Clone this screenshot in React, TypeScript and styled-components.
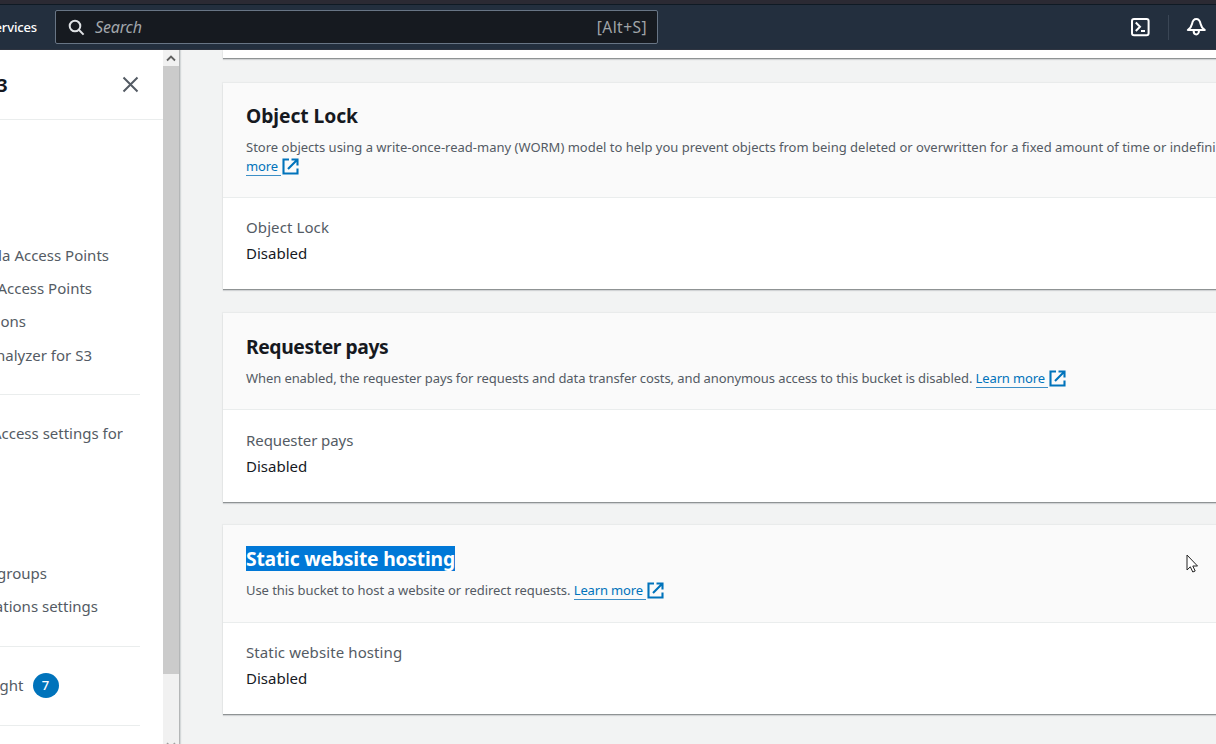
import React from "react";
import styled, { createGlobalStyle } from "styled-components";

const GlobalStyle = createGlobalStyle`
  * { box-sizing: border-box; }
  html, body { margin: 0; padding: 0; }
  body {
    width: 1216px;
    height: 744px;
    overflow: hidden;
    background: #f2f3f3;
    font-family: "Noto Sans", "Open Sans", sans-serif;
    color: #16191f;
  }
`;

const Page = styled.div`
  width: 1216px;
  height: 744px;
  display: flex;
  flex-direction: column;
  overflow: hidden;
`;

const TopBar = styled.header`
  height: 50px;
  flex: none;
  display: flex;
  align-items: flex-start;
  padding-top: 5px;
  border-top: 4px solid #2b2a33;
  border-bottom: 1px solid #2e3440;
  background: linear-gradient(#0f1a24 0 1px, #232f3e 1px);
`;

const ServicesLabel = styled.div`
  width: 37px;
  margin-right: 18px;
  display: flex;
  justify-content: flex-end;
  overflow: hidden;
  white-space: nowrap;
  font-size: 13px;
  font-weight: 500;
  line-height: 37px;
  letter-spacing: -0.15px;
  color: #fff;
`;

const SearchBox = styled.div`
  width: 603px;
  height: 34px;
  margin-top: 1px;
  display: flex;
  align-items: center;
  padding: 0 10px 0 12px;
  border: 1px solid #687585;
  border-radius: 2px;
  background: #161a20;
`;

const SearchHint = styled.span`
  margin: -1px 0 0 10px;
  font-size: 16px;
  font-style: italic;
  letter-spacing: -0.15px;
  color: #a2a7ac;
`;

const Shortcut = styled.span`
  margin-left: auto;
  font-size: 15.5px;
  letter-spacing: 0.45px;
  color: #a0a4a8;
`;

const BarActions = styled.div`
  height: 34px;
  margin: 1px 0 0 auto;
  display: flex;
  align-items: center;
  padding-right: 10px;
`;

const BarDivider = styled.div`
  width: 1px;
  height: 25px;
  margin: 0 17px 0 18px;
  background: #3a4655;
`;

const Body = styled.div`
  flex: 1;
  min-height: 0;
  display: flex;
`;

const Sidebar = styled.nav`
  width: 163px;
  flex: none;
  background: #fff;
  overflow: hidden;
`;

const SidebarHead = styled.div`
  height: 70px;
  display: flex;
  align-items: center;
  justify-content: space-between;
  padding-right: 24px;
  border-bottom: 1px solid #eaeded;
`;

const SidebarTitle = styled.div<{ $end: number }>`
  width: ${(p) => p.$end}px;
  display: flex;
  justify-content: flex-end;
  overflow: hidden;
  font-size: 18px;
  font-weight: 700;
`;

const NavGroup = styled.div<{ $top: number; $bottom: number }>`
  width: 140px;
  padding: ${(p) => p.$top}px 0 ${(p) => p.$bottom}px;
  border-bottom: 1px solid #eaeded;
`;

const NavItem = styled.div<{ $end: number }>`
  width: ${(p) => p.$end}px;
  height: 33.4px;
  display: flex;
  align-items: center;
  justify-content: flex-end;
  overflow: hidden;
  white-space: nowrap;
  font-size: 15px;
  color: #545b64;
`;

const NavSpace = styled.div`
  height: 106px;
`;

const Badge = styled.span`
  width: 26px;
  height: 25px;
  flex: none;
  margin-left: 9px;
  border-radius: 50%;
  background: #0073bb;
  color: #fff;
  font-size: 13px;
  font-weight: 500;
  line-height: 25px;
  text-align: center;
`;

const Scrollbar = styled.div`
  width: 17px;
  flex: none;
  display: flex;
  flex-direction: column;
  align-items: stretch;
  border-right: 1px solid #b4b6b7;
  box-shadow: 1px 0 1px rgba(0, 28, 36, 0.12);
  background: #f1f1f1;
`;

const ScrollButton = styled.div`
  height: 16px;
  display: flex;
  align-items: center;
  justify-content: center;
`;

const Thumb = styled.div`
  height: 608px;
  background: #cbcbcb;
`;

const ScrollEnd = styled.div`
  flex: 1;
  display: flex;
  align-items: flex-end;
  justify-content: center;
`;

const Main = styled.main`
  flex: 1;
  min-width: 0;
  padding-left: 43px;
  overflow: hidden;
`;

const Card = styled.section<{ $height: number; $gap: number }>`
  height: ${(p) => p.$height}px;
  margin-bottom: ${(p) => p.$gap}px;
  background: #fff;
  box-shadow: 0 1px 0 #8f9394, 0 2px 1px rgba(0, 10, 20, 0.13), 0 0 1px 1px rgba(0, 28, 36, 0.035);
`;

const CardHead = styled.div<{ $height: number; $top: number }>`
  height: ${(p) => p.$height}px;
  padding: ${(p) => p.$top}px 0 0 23px;
  border-bottom: 1px solid #eaeded;
  background: #fafafa;
`;

const Title = styled.h2<{ $selected?: boolean; $spacing: number }>`
  width: fit-content;
  margin: 0;
  font-size: 19.3px;
  font-weight: 700;
  line-height: 25px;
  letter-spacing: ${(p) => p.$spacing}px;
  white-space: nowrap;
  color: ${(p) => (p.$selected ? "#fff" : "#16191f")};
  background: ${(p) => (p.$selected ? "#0078d7" : "transparent")};
`;

const Description = styled.p<{ $spacing: number }>`
  margin: 10px 0 0;
  font-size: 13px;
  line-height: 19px;
  letter-spacing: ${(p) => p.$spacing}px;
  white-space: nowrap;
  color: #545b64;
`;

const Link = styled.a`
  display: inline-flex;
  align-items: center;
  height: 19px;
  color: #0073bb;
  vertical-align: top;
`;

const LinkText = styled.span`
  padding-right: 3px;
  margin-right: 1px;
  border-bottom: 1px solid #3d8fc6;
  line-height: 17px;
  letter-spacing: -0.14px;
`;

const Field = styled.dl<{ $top: number }>`
  margin: 0;
  padding: ${(p) => p.$top}px 0 0 23px;
  font-size: 15px;
  line-height: 26.4px;
`;

const FieldLabel = styled.dt<{ $spacing: number }>`
  letter-spacing: ${(p) => p.$spacing}px;
  color: #545b64;
`;

const FieldValue = styled.dd`
  margin: 0;
  color: #16191f;
`;

const Pointer = styled.svg`
  position: absolute;
  left: 1186px;
  top: 554px;
`;

const ExternalIcon = () => (
  <svg width="17" height="17" viewBox="0 0 17 17" fill="none" stroke="#0073bb" strokeWidth="2.1">
    <path d="M7 1.5H1.5v14h14V10.5" />
    <path d="M9.5 1.5h6v6M15.2 1.8L6 11" />
  </svg>
);

const LearnMore = ({ text }: { text: string }) => (
  <Link>
    <LinkText>{text}</LinkText>
    <ExternalIcon />
  </Link>
);

export default function App() {
  return (
    <Page>
      <GlobalStyle />
      <TopBar>
        <ServicesLabel>ervices</ServicesLabel>
        <SearchBox>
          <svg width="17" height="17" viewBox="0 0 17 17" fill="none" stroke="#dfe2e5" strokeWidth="2">
            <circle cx="7" cy="7" r="5.3" />
            <path d="M10.8 10.8L15.6 15.6" />
          </svg>
          <SearchHint>Search</SearchHint>
          <Shortcut>[Alt+S]</Shortcut>
        </SearchBox>
        <BarActions>
          <svg width="20" height="20" viewBox="0 0 20 20" fill="none" stroke="#fff" strokeWidth="2">
            <rect x="2" y="2" width="16.6" height="16.2" rx="2" />
            <path d="M5.8 5.5L10 9.8L5.8 14M11 14H15" />
          </svg>
          <BarDivider />
          <svg width="20" height="20" viewBox="0 0 20 20" fill="none" stroke="#fff" strokeWidth="2" strokeLinejoin="round">
            <path d="M10.3 2C7.8 2 6.6 4 6 7C5.5 9.8 4 11.4 1.8 13H18.8C16.6 11.4 15.1 9.8 14.6 7C14 4 12.8 2 10.3 2Z" />
            <path d="M7.6 13.5C7.6 18.7 13 18.7 13 13.5" />
          </svg>
        </BarActions>
      </TopBar>
      <Body>
        <Sidebar>
          <SidebarHead>
            <SidebarTitle $end={7.5}>3</SidebarTitle>
            <svg width="17" height="17" viewBox="0 0 17 17" fill="none" stroke="#545b64" strokeWidth="2">
              <path d="M1.5 1.5L15.5 15.5M15.5 1.5L1.5 15.5" />
            </svg>
          </SidebarHead>
          <NavGroup $top={118} $bottom={22}>
            <NavItem $end={109}>da Access Points</NavItem>
            <NavItem $end={92}>Access Points</NavItem>
            <NavItem $end={26}>ons</NavItem>
            <NavItem $end={92}>nalyzer for S3</NavItem>
          </NavGroup>
          <NavGroup $top={22} $bottom={23}>
            <NavItem $end={123}>Access settings for</NavItem>
            <NavSpace />
            <NavItem $end={47}>groups</NavItem>
            <NavItem $end={98}>ations settings</NavItem>
          </NavGroup>
          <NavGroup $top={22} $bottom={23}>
            <NavItem $end={58.5}>
              ght<Badge>7</Badge>
            </NavItem>
          </NavGroup>
        </Sidebar>
        <Scrollbar>
          <ScrollButton>
            <svg width="10" height="7" viewBox="0 0 10 7" fill="none" stroke="#606060" strokeWidth="1.8">
              <path d="M1 5.5L5 1.5L9 5.5" />
            </svg>
          </ScrollButton>
          <Thumb />
          <ScrollEnd>
            <svg width="10" height="2" viewBox="0 0 10 2" fill="none" stroke="#a0a0a0" strokeWidth="1.5">
              <path d="M1 1L2.5 2.5M9 1L7.5 2.5" />
            </svg>
          </ScrollEnd>
        </Scrollbar>
        <Main>
          <Card $height={8} $gap={25} />
          <Card $height={206} $gap={24}>
            <CardHead $height={115} $top={20}>
              <Title $spacing={-0.07}>Object Lock</Title>
              <Description $spacing={0}>
                Store objects using a write-once-read-many (WORM) model to help you prevent objects from being deleted or
                overwritten for a fixed amount of time or indefini
                <br />
                <LearnMore text="more" />
              </Description>
            </CardHead>
            <Field $top={16}>
              <FieldLabel $spacing={0.1}>Object Lock</FieldLabel>
              <FieldValue>Disabled</FieldValue>
            </Field>
          </Card>
          <Card $height={189} $gap={23}>
            <CardHead $height={97} $top={21}>
              <Title $spacing={-0.4}>Requester pays</Title>
              <Description $spacing={-0.09}>
                When enabled, the requester pays for requests and data transfer costs, and anonymous access to this
                bucket is disabled. <LearnMore text="Learn more" />
              </Description>
            </CardHead>
            <Field $top={17}>
              <FieldLabel $spacing={-0.08}>Requester pays</FieldLabel>
              <FieldValue>Disabled</FieldValue>
            </Field>
          </Card>
          <Card $height={189} $gap={0}>
            <CardHead $height={98} $top={21}>
              <Title $spacing={-0.2} $selected>
                Static website hosting
              </Title>
              <Description $spacing={-0.06}>
                Use this bucket to host a website or redirect requests. <LearnMore text="Learn more" />
              </Description>
            </CardHead>
            <Field $top={16}>
              <FieldLabel $spacing={0.1}>Static website hosting</FieldLabel>
              <FieldValue>Disabled</FieldValue>
            </Field>
          </Card>
        </Main>
      </Body>
      <Pointer width="13" height="20" viewBox="0 0 13 20" fill="#fff" stroke="#222" strokeWidth="1">
        <path d="M1 1V16L4.3 12.8L6.8 18L9.2 17L6.8 12H11.5Z" />
      </Pointer>
    </Page>
  );
}
